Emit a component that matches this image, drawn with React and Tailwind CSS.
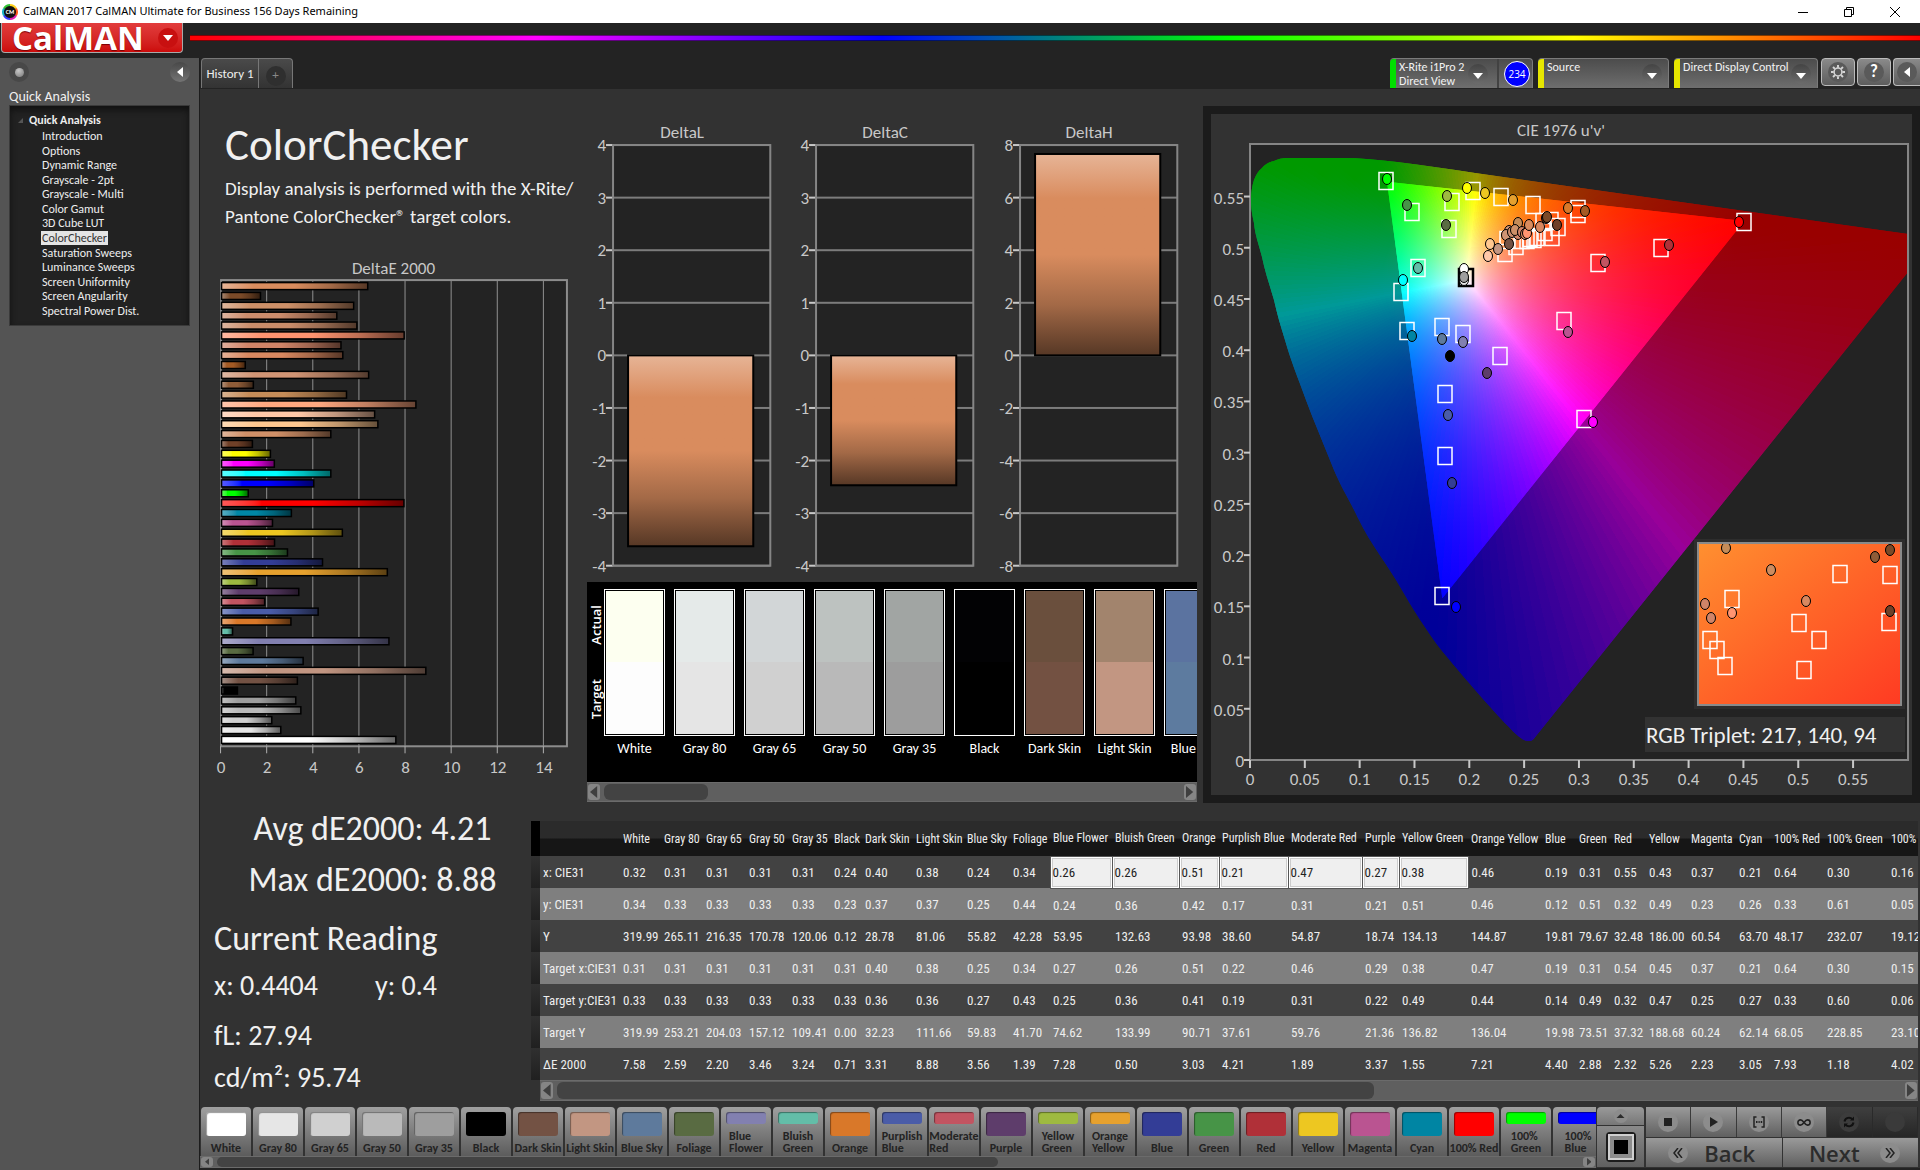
import { Fragment } from 'react';

// ── Data ───────────────────────────────────────────────────────────────────

const PATCHES = [
  { name: 'White', color: '#ffffff', actual: '#fdfff0', target: '#fdfdfd' },
  { name: 'Gray 80', color: '#e6e6e6', actual: '#e5eae9', target: '#e5e5e5' },
  { name: 'Gray 65', color: '#d0d0d0', actual: '#d2d6d7', target: '#d0d0d0' },
  { name: 'Gray 50', color: '#bababa', actual: '#bdc2c0', target: '#b9b9b9' },
  { name: 'Gray 35', color: '#9e9e9e', actual: '#a1a5a3', target: '#9d9d9d' },
  { name: 'Black', color: '#000000', actual: '#020204', target: '#000000' },
  { name: 'Dark Skin', color: '#735244', actual: '#6a4f3d', target: '#735142' },
  { name: 'Light Skin', color: '#c29682', actual: '#a2846d', target: '#c29682' },
  { name: 'Blue Sky', color: '#5e7a9c', actual: '#5b73a0', target: '#5d7b9f' },
  { name: 'Foliage', color: '#596b42' },
  { name: 'Blue Flower', color: '#8280b0', lines: ['Blue', 'Flower'] },
  { name: 'Bluish Green', color: '#63bda8', lines: ['Bluish', 'Green'] },
  { name: 'Orange', color: '#d97829' },
  { name: 'Purplish Blue', color: '#4a5ca8', lines: ['Purplish', 'Blue'] },
  { name: 'Moderate Red', color: '#c25461', lines: ['Moderate', 'Red'] },
  { name: 'Purple', color: '#5e3d6b' },
  { name: 'Yellow Green', color: '#9eba40', lines: ['Yellow', 'Green'] },
  { name: 'Orange Yellow', color: '#e6a12e', lines: ['Orange', 'Yellow'] },
  { name: 'Blue', color: '#333d96' },
  { name: 'Green', color: '#479447' },
  { name: 'Red', color: '#b03038' },
  { name: 'Yellow', color: '#edc721' },
  { name: 'Magenta', color: '#ba5491' },
  { name: 'Cyan', color: '#0085a3' },
  { name: '100% Red', color: '#ff0000' },
  { name: '100% Green', color: '#00ff00', lines: ['100%', 'Green'] },
  { name: '100% Blue', color: '#0000ff', lines: ['100%', 'Blue'] },
];

const COLUMN_WIDTHS = [9, 80, 41, 42, 43, 43, 42, 31, 51, 51, 46, 40, 62, 67, 40, 69, 74, 37, 69, 74, 34, 35, 35, 42, 48, 35, 53, 64, 40];

const READINGS = [
  ['x: CIE31', '0.32 0.31 0.31 0.31 0.31 0.24 0.40 0.38 0.24 0.34 0.26 0.26 0.51 0.21 0.47 0.27 0.38 0.46 0.19 0.31 0.55 0.43 0.37 0.21 0.64 0.30 0.16'],
  ['y: CIE31', '0.34 0.33 0.33 0.33 0.33 0.23 0.37 0.37 0.25 0.44 0.24 0.36 0.42 0.17 0.31 0.21 0.51 0.46 0.12 0.51 0.32 0.49 0.23 0.26 0.33 0.61 0.05'],
  ['Y', '319.99 265.11 216.35 170.78 120.06 0.12 28.78 81.06 55.82 42.28 53.95 132.63 93.98 38.60 54.87 18.74 134.13 144.87 19.81 79.67 32.48 186.00 60.54 63.70 48.17 232.07 19.12'],
  ['Target x:CIE31', '0.31 0.31 0.31 0.31 0.31 0.31 0.40 0.38 0.25 0.34 0.27 0.26 0.51 0.22 0.46 0.29 0.38 0.47 0.19 0.31 0.54 0.45 0.37 0.21 0.64 0.30 0.15'],
  ['Target y:CIE31', '0.33 0.33 0.33 0.33 0.33 0.33 0.36 0.36 0.27 0.43 0.25 0.36 0.41 0.19 0.31 0.22 0.49 0.44 0.14 0.49 0.32 0.47 0.25 0.27 0.33 0.60 0.06'],
  ['Target Y', '319.99 253.21 204.03 157.12 109.41 0.00 32.23 111.66 59.83 41.70 74.62 133.99 90.71 37.61 59.76 21.36 136.82 136.04 19.98 73.51 37.32 188.68 60.24 62.14 68.05 228.85 23.10'],
  ['ΔE 2000', '7.58 2.59 2.20 3.46 3.24 0.71 3.31 8.88 3.56 1.39 7.28 0.50 3.03 4.21 1.89 3.37 1.55 7.21 4.40 2.88 2.32 5.26 2.23 3.05 7.93 1.18 4.02'],
];

const DELTA_E = [
  [6.36, '#d98c5e'], [1.71, '#7a4a28'], [5.75, '#cd9068'], [5.02, '#cc8c6c'], [5.89, '#c98c6a'], [7.94, '#ff9470'], [5.2, '#d08468'], [5.28, '#d88860'],
  [1.05, '#a45a24'], [6.4, '#d09474'], [1.4, '#8f5c38'], [5.44, '#c58c58'], [8.45, '#ffa880'], [6.66, '#ffc8a8'], [6.8, '#ffc890'], [4.76, '#d09068'], [1.36, '#6f4028'],
  [2.14, '#ffff00'], [2.31, '#ff00ff'], [4.76, '#00ffff'], [4.02, '#0000ff'], [1.18, '#00ff00'], [7.93, '#ff0000'], [3.05, '#0087a5'], [2.23, '#ba5491'],
  [5.26, '#edc721'], [2.32, '#b03038'], [2.88, '#479447'], [4.4, '#333d96'], [7.21, '#e6a12e'], [1.55, '#9eba40'], [3.37, '#5e3d6b'], [1.89, '#c25461'],
  [4.21, '#4a5ca8'], [3.03, '#d97829'], [0.5, '#63bda8'], [7.28, '#8280b0'], [1.39, '#596b42'], [3.56, '#5e7a9c'], [8.88, '#c29682'], [3.31, '#735244'],
  [0.71, '#000000'], [3.24, '#9e9e9e'], [3.46, '#bababa'], [2.2, '#d0d0d0'], [2.59, '#e6e6e6'], [7.58, '#ffffff'],
];

const WORKFLOW = [
  'Introduction', 'Options', 'Dynamic Range', 'Grayscale - 2pt', 'Grayscale - Multi', 'Color Gamut', '3D Cube LUT',
  'ColorChecker', 'Saturation Sweeps', 'Luminance Sweeps', 'Screen Uniformity', 'Screen Angularity', 'Spectral Power Dist.',
];

// ── Small shared pieces ────────────────────────────────────────────────────

function ScrollBar({ className, thumbClass, label }) {
  return (
    <div role="scrollbar" aria-orientation="horizontal" aria-controls={label} aria-valuenow={0} className={`flex items-stretch gap-1 bg-[#5f5f5f] border-y border-[#6b6b6b] px-px ${className}`}>
      <button type="button" aria-label="Scroll left" className="w-3 shrink-0 rounded-[3px] bg-[#858585] flex items-center justify-center">
        <svg viewBox="0 0 6 10" className="h-3/4"><path d="M6 0v10L0 5z" fill="#3f3f3f" /></svg>
      </button>
      <div className="flex-1">
        <div className={`h-full rounded-md bg-[#434343] ${thumbClass}`} />
      </div>
      <button type="button" aria-label="Scroll right" className="w-3 shrink-0 rounded-[3px] bg-[#858585] flex items-center justify-center">
        <svg viewBox="0 0 6 10" className="h-3/4"><path d="M0 0v10l6-5z" fill="#3f3f3f" /></svg>
      </button>
    </div>
  );
}

function DropArrow() {
  return (
    <span className="w-5 h-5 rounded-full bg-linear-to-b from-[#444] to-[#6c6c6c] flex items-center justify-center shrink-0">
      <svg viewBox="0 0 10 6" className="w-[10px] mt-1"><path d="M0 0h10L5 6z" fill="#fff" /></svg>
    </span>
  );
}

// ── Window chrome ──────────────────────────────────────────────────────────

function TitleBar() {
  return (
    <header className="h-[23px] bg-white text-black flex items-center pl-[2px]">
      <svg viewBox="0 0 16 16" className="w-4 h-4">
        <circle cx="8" cy="8" r="7" fill="#111" />
        <g fill="none" strokeWidth="2">
          <path d="M8 1a7 7 0 0 1 6 3.5" stroke="#ffd21f" />
          <path d="M14 4.500a7 7 0 0 1 0 7" stroke="#ff5a1f" />
          <path d="M14 11.500a7 7 0 0 1-6 3.500" stroke="#e21fb0" />
          <path d="M8 15a7 7 0 0 1-6-3.500" stroke="#3b3bff" />
          <path d="M2 11.500a7 7 0 0 1 0-7" stroke="#16b4c8" />
          <path d="M2 4.500a7 7 0 0 1 6-3.500" stroke="#35c435" />
        </g>
        <text x="8" y="10" textAnchor="middle" fontSize="6" fontWeight="700" fill="#fff">CM</text>
      </svg>
      <h1 className="ml-[5px] text-[11px] font-['Noto_Sans',sans-serif]">CalMAN 2017 CalMAN Ultimate for Business 156 Days Remaining</h1>
      <div className="ml-auto flex items-center gap-9 pr-5">
        <button type="button" aria-label="Minimize"><svg viewBox="0 0 10 10" className="w-[10px]"><path d="M0 5.500h10" stroke="#000" /></svg></button>
        <button type="button" aria-label="Restore"><svg viewBox="0 0 10 10" className="w-[10px]" fill="none" stroke="#000"><path d="M.5 2.500h7v7h-7zM2.500 2.500v-2h7v7h-2" /></svg></button>
        <button type="button" aria-label="Close"><svg viewBox="0 0 10 10" className="w-[10px]"><path d="M0 0l10 10M10 0L0 10" stroke="#000" /></svg></button>
      </div>
    </header>
  );
}

function Brand() {
  return (
    <div className="h-[35px] bg-[#232323] flex items-start">
      <button type="button" className="ml-px w-[182px] h-[30px] rounded-b-[4px] border border-t-0 border-[#a9a9a9] bg-linear-to-b from-[#e23c3c] to-[#cc0a0a] flex items-center pl-[10px] pr-1">
        <span className="text-[33px] leading-[28px] font-bold text-white font-['Open_Sans',sans-serif] [text-shadow:0_1px_1px_#7a0000]">CalMAN</span>
        <span className="ml-auto w-5 h-5 rounded-full bg-[#c81010] flex items-center justify-center">
          <svg viewBox="0 0 10 6" className="w-[10px]"><path d="M0 0h10L5 6z" fill="#fff" /></svg>
        </span>
      </button>
      <div className="ml-[7px] mt-3 h-[6px] flex-1 border-y border-black/50 bg-[linear-gradient(to_right,#f00,#f0f_20%,#00f_40%,#0f0_60%,#ff0_80%,#f00)]" />
    </div>
  );
}

function Sidebar() {
  return (
    <aside className="w-[200px] shrink-0 bg-[#545454] border-r border-[#1c1c1c] px-[9px]">
      <div className="flex justify-between pt-1">
        <span className="w-5 h-5 rounded-full bg-[#484848] flex items-center justify-center">
          <span className="w-[9px] h-[9px] rounded-full bg-[radial-gradient(circle_at_40%_30%,#c8c8c8,#777)]" />
        </span>
        <button type="button" aria-label="Collapse" className="w-5 h-5 rounded-full bg-linear-to-b from-[#484848] to-[#747474] flex items-center justify-center">
          <svg viewBox="0 0 6 10" className="w-[6px]"><path d="M6 0v10L0 5z" fill="#fff" /></svg>
        </button>
      </div>
      <h2 className="mt-[6px] text-[14px] leading-[17px] text-[#f0f0f0]">Quick Analysis</h2>
      <nav className="h-[221px] border border-[#3a3a3a] bg-[#222] shadow-[inset_0_4px_6px_#111] text-[12px] leading-[14px] text-[#eee] pt-[6px] pl-2">
        <h3 className="flex items-center gap-[6px] font-bold leading-[17px]">
          <svg viewBox="0 0 5 5" className="w-[5px]"><path d="M5 0v5H0z" fill="#555" /></svg>
          Quick Analysis
        </h3>
        <ul className="h-[189px] pl-[23px] flex flex-col justify-between">
          {WORKFLOW.map((item) => (
            <li key={item}>
              <a href="#" className={item === 'ColorChecker' ? 'bg-[#e4e4e4] text-[#333] px-px' : 'px-px'}>{item}</a>
            </li>
          ))}
        </ul>
      </nav>
    </aside>
  );
}

function SourceTab({ color, width, children }) {
  return (
    <button type="button" className={`h-[30px] rounded-t-[4px] border-t border-r border-[#7b7b7b] bg-linear-to-b from-[#4c4c4c] to-[#6e6e6e] flex items-center text-left text-[12px] leading-[14px] text-[#f2f2f2] whitespace-nowrap ${width}`}>
      <span className={`w-[6px] h-full shrink-0 rounded-tl-[4px] ${color}`} />
      {children}
    </button>
  );
}

function TopTabs() {
  return (
    <div className="h-[31px] bg-[#232323] flex items-start">
      <button type="button" className="ml-px w-[58px] h-[30px] rounded-tl-[4px] border border-b-0 border-[#777] bg-linear-to-b from-[#4a4a4a] to-[#333] text-[13px] text-[#eee]">History 1</button>
      <button type="button" aria-label="Add history" className="w-[34px] h-[30px] rounded-tr-[4px] border border-b-0 border-l-0 border-[#777] bg-linear-to-b from-[#4a4a4a] to-[#333] flex items-center justify-center">
        <span className="mt-1 w-5 h-5 rounded-full bg-[#2f2f2f] text-[13px] leading-[18px] text-[#888]">+</span>
      </button>
      <div className="ml-auto flex">
        <SourceTab color="bg-[#00e000]" width="w-[143px]">
          <span className="pl-[3px] w-[72px]">X-Rite i1Pro 2<br />Direct View</span>
          <DropArrow />
          <span className="ml-[9px] h-full border-l-2 border-[#424242] flex items-center pl-[5px]">
            <span className="w-[26px] h-[26px] rounded-full border border-white bg-[#0000ff] text-white text-[10px] leading-[24px] text-center font-['Open_Sans',sans-serif]">234</span>
          </span>
        </SourceTab>
        <span className="w-[5px]" />
        <SourceTab color="bg-[#e6e600]" width="w-[131px]">
          <span className="pl-[3px] h-full pt-px">Source</span>
          <span className="ml-auto pr-[6px]"><DropArrow /></span>
        </SourceTab>
        <span className="w-[5px]" />
        <SourceTab color="bg-[#e6e600]" width="w-[144px]">
          <span className="pl-[3px] h-full pt-px">Direct Display Control</span>
          <span className="ml-auto pr-[6px]"><DropArrow /></span>
        </SourceTab>
        <div className="flex gap-[2px] pl-[3px]">
          <button type="button" aria-label="Settings" className="w-[34px] h-7 rounded-[4px] border border-[#bbb] bg-linear-to-b from-[#8a8a8a] to-[#5d5d5d] flex items-center justify-center">
            <span className="w-5 h-5 rounded-full bg-[#5a5a5a] flex items-center justify-center">
              <svg viewBox="0 0 16 16" className="w-[14px]" fill="none" stroke="#d5d5d5">
                <circle cx="8" cy="8" r="4.500" strokeWidth="1.800" />
                <path strokeWidth="2.200" d="M8 0v3M8 13v3M0 8h3M13 8h3M2.300 2.300l2.200 2.200M11.500 11.500l2.200 2.200M13.700 2.300l-2.200 2.200M4.500 11.500l-2.200 2.200" />
              </svg>
            </span>
          </button>
          <button type="button" aria-label="Help" className="w-[34px] h-7 rounded-[4px] border border-[#bbb] bg-linear-to-b from-[#8a8a8a] to-[#5d5d5d] flex items-center justify-center">
            <span className="w-5 h-5 rounded-full bg-[#5a5a5a] text-white text-[17px] leading-[20px] font-bold">?</span>
          </button>
          <button type="button" aria-label="Collapse panel" className="w-[27px] h-7 rounded-l-[4px] border border-r-0 border-[#bbb] bg-linear-to-b from-[#8a8a8a] to-[#5d5d5d] flex items-center justify-center">
            <span className="w-5 h-5 rounded-full bg-[#5a5a5a] flex items-center justify-center">
              <svg viewBox="0 0 6 10" className="w-[6px]"><path d="M6 0v10L0 5z" fill="#fff" /></svg>
            </span>
          </button>
        </div>
      </div>
    </div>
  );
}

// ── Charts ─────────────────────────────────────────────────────────────────

// highlight -> base -> shadow, along the bar
function BarGradient({ id, color, vertical }) {
  return (
    <linearGradient id={id} x1="0" y1="0" x2={vertical ? 0 : 1} y2={vertical ? 1 : 0}>
      <stop offset="0" stopColor={`color-mix(in srgb, ${color} 65%, white)`} />
      <stop offset="0.22" stopColor={color} />
      <stop offset="0.5" stopColor={color} />
      <stop offset="0.75" stopColor={`color-mix(in srgb, ${color} 75%, black)`} />
      <stop offset="1" stopColor={`color-mix(in srgb, ${color} 40%, black)`} />
    </linearGradient>
  );
}

function DeltaEChart() {
  const left = 21;
  const top = 31;
  const bottom = 496;
  const unit = 23;
  return (
    <svg viewBox="0 0 386 540" className="w-full" fill="#c8c8c8" fontSize="17">
      <text x="193" y="25" textAnchor="middle">DeltaE 2000</text>
      <rect x={left} y={top} width={345} height={bottom - top} fill="#232323" />
      {[2, 4, 6, 8, 10, 12, 14].map((v) => <rect key={v} x={left + v * unit - 1} y={top} width="1" height={bottom - top} fill="#909090" />)}
      <rect x={left} y={top} width={345} height={bottom - top} fill="none" stroke="#8c8c8c" strokeWidth="2" />
      {DELTA_E.map(([value, color], i) => (
        <Fragment key={i}>
          <BarGradient id={`de${i}`} color={color} />
          <rect x={left + 0.5} y={top + 2.5 + i * 9.84} width={value * unit - 0.5} height="7" fill={`url(#de${i})`} stroke="#000" strokeWidth="1.5" />
        </Fragment>
      ))}
      {[0, 2, 4, 6, 8, 10, 12, 14].map((v) => (
        <Fragment key={v}>
          <rect x={left + v * unit - 1} y={bottom} width="1" height="7" fill="#b0b0b0" />
          <text x={left + v * unit} y="523" textAnchor="middle">{v}</text>
        </Fragment>
      ))}
    </svg>
  );
}

function DeltaChart({ title, max, value }) {
  const zero = 236;
  const span = 210;
  const h = (Math.abs(value) / max) * span;
  return (
    <svg viewBox="0 0 203 462" className="w-full" fill="#c8c8c8" fontSize="17">
      <text x="95" y="19" textAnchor="middle">{title}</text>
      <rect x="26" y="25" width="157" height="420" fill="#232323" />
      {[4, 3, 2, 1, 0, -1, -2, -3, -4].map((s) => {
        const y = zero - 1 - (s * span) / 4;
        return (
          <Fragment key={s}>
            <rect x="19" y={y} width="7" height="2" fill="#c8c8c8" />
            <rect x="26" y={y} width="157" height="2" fill="#7c7c7c" />
            <text x="19" y={y + 7} textAnchor="end">{(s * max) / 4}</text>
          </Fragment>
        );
      })}
      <rect x="26" y="26" width="157" height="420" fill="none" stroke="#858585" strokeWidth="2" />
      <BarGradient id={title} color="#d98c5e" vertical />
      <rect x="41" y={value < 0 ? zero : zero - h} width="125" height={h} fill={`url(#${title})`} stroke="#000" strokeWidth="2" />
    </svg>
  );
}

// ── CIE 1976 u'v' diagram ──────────────────────────────────────────────────

const U_SCALE = 1096.5;
const V_SCALE = 1024.5;
const PLOT_H = 616;
const WHITE = [0.1978, 0.4683];
const PRIMARIES = [[0.4507, 0.526], [0.125, 0.5645], [0.1754, 0.158]];

const toPlot = ([u, v]) => [u * U_SCALE, PLOT_H - v * V_SCALE];

function chromaToRgb(u, v, level) {
  const d = 6 * u - 16 * v + 12;
  const x = (9 * u) / d;
  const y = (4 * v) / d;
  const X = x / y;
  const Z = (1 - x - y) / y;
  const lin = [
    3.2406 * X - 1.5372 - 0.4986 * Z,
    -0.9689 * X + 1.8758 + 0.0415 * Z,
    0.0557 * X - 0.204 + 1.057 * Z,
  ].map((c) => Math.max(0, c));
  const peak = Math.max(...lin);
  return `rgb(${lin.map((c) => Math.round(255 * level * (c / peak))).join(',')})`;
}

const RAYS = 240;
const REACH = 0.62;

// One thin wedge per direction from the white point, coloured along its length
function Wedges({ prefix, level, reach, steps }) {
  const [cx, cy] = toPlot(WHITE);
  return Array.from({ length: RAYS }).map((_, i) => {
    const a = (i / RAYS) * Math.PI * 2;
    const at = (angle, r) => toPlot([WHITE[0] + Math.cos(angle) * r, WHITE[1] + Math.sin(angle) * r]);
    const [mx, my] = at(a, reach);
    const half = (Math.PI / RAYS) * 2;
    const [ax, ay] = at(a - half, reach * 1.05);
    const [bx, by] = at(a + half, reach * 1.05);
    return (
      <Fragment key={i}>
        <linearGradient id={`${prefix}${i}`} gradientUnits="userSpaceOnUse" x1={cx} y1={cy} x2={mx} y2={my}>
          {Array.from({ length: steps + 1 }).map((__, k) => {
            const t = (k / steps) ** 1.5;
            const v = Math.min(0.6, Math.max(0.005, WHITE[1] + Math.sin(a) * reach * t));
            const u = Math.max(0.001, WHITE[0] + Math.cos(a) * reach * t);
            return <stop key={k} offset={t} stopColor={chromaToRgb(u, v, level)} />;
          })}
        </linearGradient>
        <path d={`M${cx} ${cy}L${ax} ${ay}L${bx} ${by}z`} fill={`url(#${prefix}${i})`} shapeRendering="crispEdges" />
      </Fragment>
    );
  });
}

const LOCUS = 'M279 597C272 598 262 586 257 581C245 569 211 530 198 514C190 505 183 495 175 483C167 471 160 460 152 446C138 421 121 401 108 374C99 355 92 345 84 326C73 298 65 280 56 256C48 234 41 217 35 196C31 183 27 170 24 156C20 142 15 128 12 113C9 101 5 91 4 79C2 70 1 64 1 56C1 49 2 42 4 36C6 31 8 27 12 24C15 20 19 18 24 17C28 15 32 14 37 14L92 14C111 14 128 16 147 18C173 21 199 25 225 29L658 90V128L286 592C284 595 282 597 279 597z';

const TARGETS = [
  [136, 37], [223, 47], [202, 58], [251, 53], [283, 61], [162, 68], [199, 85], [494, 78], [411, 104], [348, 119], [168, 124], [151, 148], [157, 187],
  [192, 183], [213, 190], [250, 212], [314, 177], [195, 250], [334, 275], [195, 312], [192, 452], [255, 109], [266, 102], [257, 96], [272, 96], [277, 96],
  [280, 94], [284, 95], [287, 93], [295, 88], [293, 78], [301, 77], [302, 93], [308, 83], [328, 65], [328, 70],
];

const MEASURED = [
  [217, 44, '#ffff00'], [235, 49, '#edc721'], [263, 56, '#e6a12e'], [197, 52, '#9eba40'], [196, 81, '#596b42'], [318, 64, '#d97829'], [335, 67, '#a45a24'],
  [296, 74, '#5a3820'], [297, 73, '#7a4a28'], [307, 81, '#6f4028'], [268, 79, '#c58c58'], [259, 87, '#d09474'], [256, 91, '#d09474'], [262, 88, '#cc8c6c'],
  [268, 90, '#d08468'], [265, 86, '#cd9068'], [272, 88, '#d08468'], [275, 90, '#d88860'], [277, 89, '#ff9470'], [279, 81, '#d98c5e'], [290, 83, '#d88860'],
  [259, 100, '#735244'], [248, 105, '#c29682'], [240, 100, '#ffc890'], [238, 112, '#ffc8a8'], [214, 125, '#ffffff'], [214, 136, '#e6e6e6'], [214, 133, '#9e9e9e'],
  [355, 118, '#c25461'], [419, 101, '#b03038'], [318, 188, '#ba5491'], [192, 195, '#5e7a9c'], [213, 198, '#8280b0'], [137, 35, '#00ff00'], [157, 61, '#479447'],
  [168, 124, '#63bda8'], [153, 136, '#00ffff'], [162, 192, '#0085a3'], [200, 212, '#000000'], [237, 229, '#5e3d6b'], [198, 271, '#4a5ca8'],
  [489, 78, '#ff0000'], [343, 278, '#ff00ff'], [202, 339, '#333d96'], [206, 463, '#0000ff'],
];

const INSET_TARGETS = [[590, 430], [640, 431], [482, 455], [549, 479], [569, 496], [554, 526], [639, 478], [460, 496], [467, 506], [475, 522]];
const INSET_MEASURED = [
  [476, 404, '#c58c58'], [521, 426, '#cd8c60'], [556, 457, '#d88860'], [625, 413, '#8f5c38'], [640, 406, '#7a4a28'],
  [640, 467, '#6f4028'], [455, 460, '#d08468'], [461, 474, '#d08468'], [482, 469, '#ff9470'],
];

function Markers({ targets, measured }) {
  return (
    <>
      {targets.map(([x, y], i) => <rect key={i} x={x - 7} y={y - 8.5} width="14" height="17" fill="none" stroke="#fff" strokeWidth="1.5" />)}
      {measured.map(([x, y, color], i) => <ellipse key={i} cx={x} cy={y} rx="4.500" ry="5.500" fill={color} stroke="#000" />)}
    </>
  );
}

function CieChart() {
  const ticks = [0, 0.05, 0.1, 0.15, 0.2, 0.25, 0.3, 0.35, 0.4, 0.45, 0.5, 0.55];
  return (
    <svg viewBox="0 0 701 681" className="w-full" fill="#c8c8c8" fontSize="17">
      <defs>
        <clipPath id="locus"><path d={LOCUS} /></clipPath>
        <clipPath id="gamut"><polygon points={PRIMARIES.map((p) => toPlot(p).join(',')).join(' ')} /></clipPath>
        <clipPath id="inset"><rect x="447" y="399" width="205" height="163" /></clipPath>
        <linearGradient id="insetFill" x1="0" y1="0" x2="1" y2="1">
          <stop offset="0" stopColor="#ff9030" />
          <stop offset="0.5" stopColor="#ff6428" />
          <stop offset="1" stopColor="#ff3a22" />
        </linearGradient>
      </defs>
      <text x="350" y="22" textAnchor="middle">CIE 1976 u'v'</text>
      <g transform="translate(39 30)">
        <rect width="658" height={PLOT_H} fill="#232323" />
        <g clipPath="url(#locus)"><Wedges prefix="o" level={0.6} reach={REACH} steps={24} /></g>
        <g clipPath="url(#gamut)"><Wedges prefix="i" level={1} reach={0.34} steps={24} /></g>
        <rect width="658" height={PLOT_H} fill="none" stroke="#858585" strokeWidth="2" />
        {ticks.map((t) => (
          <Fragment key={t}>
            <rect x={t * U_SCALE - 1} y={PLOT_H} width="2" height="8" fill="#c8c8c8" />
            <text x={t * U_SCALE} y="641" textAnchor="middle">{t}</text>
            <rect x="-6" y={PLOT_H - t * V_SCALE - 1} width="6" height="2" fill="#c8c8c8" />
            <text x="-6" y={PLOT_H - t * V_SCALE + 7} textAnchor="end">{t}</text>
          </Fragment>
        ))}
        <Markers targets={TARGETS} measured={[]} />
        <rect x="209" y="125" width="14" height="17" fill="none" stroke="#000" strokeWidth="2.500" />
        <Markers targets={[]} measured={MEASURED} />
        <rect x="444" y="395" width="211" height="170" fill="#2d2d2d" />
        <g clipPath="url(#inset)">
          <rect x="447" y="399" width="205" height="163" fill="url(#insetFill)" />
          <Markers targets={INSET_TARGETS} measured={INSET_MEASURED} />
        </g>
        <rect x="448" y="399" width="203" height="162" fill="none" stroke="#8a8a8a" strokeWidth="2" />
        <rect x="395" y="573" width="260" height="35" fill="#323232" />
        <text x="396" y="599" fontSize="23" fill="#f0f0f0">RGB Triplet: 217, 140, 94</text>
      </g>
    </svg>
  );
}

// ── Swatch strip ───────────────────────────────────────────────────────────

function SwatchStrip() {
  return (
    <div>
      <div id="swatches" className="h-[200px] bg-black flex overflow-hidden pt-[7px]">
        <div className="w-[17px] h-[147px] shrink-0 flex flex-col justify-around items-center text-[13px] leading-[16px] font-semibold text-white font-['Open_Sans',sans-serif]">
          <span className="[writing-mode:vertical-rl] rotate-180">Actual</span>
          <span className="[writing-mode:vertical-rl] rotate-180">Target</span>
        </div>
        <div className="flex gap-[9px]">
          {PATCHES.slice(0, 9).map((p) => (
            <div key={p.name} className="w-[61px] shrink-0">
              <div className="h-[147px] border border-white p-px">
                <div className="h-1/2" style={{ background: p.actual }} />
                <div className="h-1/2" style={{ background: p.target }} />
              </div>
              <p className="mt-1 text-center text-[14px] leading-[18px] text-white whitespace-nowrap">{p.name}</p>
            </div>
          ))}
        </div>
      </div>
      <ScrollBar label="swatches" className="h-5 py-px" thumbClass="w-[104px]" />
    </div>
  );
}

// ── Readings ───────────────────────────────────────────────────────────────

function Summary() {
  return (
    <section className="w-[331px] shrink-0 pl-[14px] text-[#f0f0f0]">
      <div className="text-center text-[34px] leading-[51px]">
        <p>Avg dE2000: 4.21</p>
        <p>Max dE2000: 8.88</p>
      </div>
      <h3 className="mt-[8px] text-[34px] leading-[51px]">Current Reading</h3>
      <div className="text-[28px]">
        <p className="flex leading-[44px]"><span className="w-[161px]">x: 0.4404</span><span>y: 0.4</span></p>
        <p className="mt-[7px] leading-[42px]">fL: 27.94</p>
        <p className="leading-[42px]">cd/m²: 95.74</p>
      </div>
    </section>
  );
}

function ReadingsTable() {
  return (
    <section className="flex-1 min-w-0 mt-[18px] mr-[2px]">
      <div id="readings" className="overflow-hidden">
        <table className="table-fixed w-[1397px] border-collapse text-[13px] text-left text-[#eee] whitespace-nowrap font-['Roboto_Condensed','Carlito',sans-serif]">
          <colgroup>{COLUMN_WIDTHS.map((w, i) => <col key={i} style={{ width: w }} />)}</colgroup>
          <thead>
            <tr className="h-[35px] text-[12px] bg-[linear-gradient(#2b2b2b,#2b2b2b_48%,#161616_52%,#161616)]">
              <td className="bg-black" />
              <td />
              {PATCHES.map((p) => <th key={p.name} scope="col" className="p-0 pl-[3px] font-normal">{p.name}</th>)}
            </tr>
          </thead>
          <tbody>
            {READINGS.map(([label, values], r) => (
              <tr key={label} className={`h-8 ${r % 2 ? 'bg-[#7f7f7f]' : 'bg-[#424242]'}`}>
                <td className="bg-linear-to-b from-[#303030] to-[#202020]" />
                <th scope="row" className="p-0 pt-[2px] pl-[3px] font-normal">{label}</th>
                {values.split(' ').map((v, c) => (
                  <td key={c} className={r === 0 && c > 9 && c < 17 ? 'p-0 pt-[2px] pl-[2px] bg-[#efefef] text-[#222] border border-[#555] shadow-[inset_0_0_0_1px_#fff,inset_0_0_0_2px_#ccc]' : 'p-0 pt-[2px] pl-[3px]'}>{v}</td>
                ))}
              </tr>
            ))}
          </tbody>
        </table>
      </div>
      <ScrollBar label="readings" className="h-[21px] ml-[9px] py-px" thumbClass="w-[817px]" />
    </section>
  );
}

// ── Bottom bar ─────────────────────────────────────────────────────────────

function IconDot({ children }) {
  return <span className="w-5 h-5 rounded-full bg-[#8c8c8c] flex items-center justify-center shrink-0">{children}</span>;
}

function PatchBar() {
  return (
    <div className="flex-1 min-w-0 bg-[#323232]">
      <div id="patches" className="flex gap-[2px] overflow-hidden pl-px">
        {PATCHES.map((p) => (
          <button key={p.name} type="button" className="w-[50px] h-[49px] shrink-0 rounded-t-[4px] bg-linear-to-b from-[#a0a0a0] to-[#5c5c5c] pt-[5px] flex flex-col items-center justify-between text-[12px] leading-[12px] font-bold text-[#232323] text-left whitespace-nowrap pb-[2px]">
            <span className={`w-10 rounded-[3px] shadow-[inset_1px_1px_1px_#0006] ${p.lines ? 'h-3' : 'h-6'}`} style={{ background: p.color }} />
            <span>{p.lines ? <>{p.lines[0]}<br />{p.lines[1]}</> : p.name}</span>
          </button>
        ))}
      </div>
      <ScrollBar label="patches" className="h-3" thumbClass="w-[781px]" />
    </div>
  );
}

function Transport() {
  const cell = 'h-[30px] border-r border-[#3a3a3a] bg-linear-to-b from-[#9a9a9a] to-[#606060] flex items-center justify-center';
  const off = 'h-[30px] border-r border-[#2a2a2a] bg-linear-to-b from-[#3f3f3f] to-[#262626] flex items-center justify-center';
  const nav = "h-[29px] bg-linear-to-b from-[#9a9a9a] to-[#606060] flex items-center justify-center text-[22px] leading-[28px] font-semibold text-[#2c2c2c] font-['Open_Sans',sans-serif]";
  return (
    <div className="flex gap-[2px] pl-px pr-[2px]">
      <div className="w-[47px] flex flex-col gap-px">
        <button type="button" aria-label="Expand" className="h-[18px] rounded-t-[4px] bg-linear-to-b from-[#9a9a9a] to-[#777] flex items-center justify-center">
          <span className="w-[14px] h-[14px] rounded-full bg-[#8c8c8c] flex items-center justify-center"><svg viewBox="0 0 10 5" className="w-[9px]"><path d="M0 5h10L5 0z" fill="#2c2c2c" /></svg></span>
        </button>
        <button type="button" aria-label="Pattern window" className="h-[41px] bg-linear-to-b from-[#8a8a8a] to-[#606060] flex items-center justify-center">
          <span className="w-[30px] h-[30px] rounded-[4px] border-2 border-[#1c1c1c] flex">
            <span className="flex-1 border-2 border-[#d0d0d0] bg-[#8c8c8c] flex items-center justify-center"><span className="w-[14px] h-[14px] bg-black" /></span>
          </span>
        </button>
      </div>
      <div className="w-[272px]">
        <div className="grid grid-cols-6">
          <button type="button" aria-label="Stop" className={cell}><IconDot><svg viewBox="0 0 8 8" className="w-2"><rect width="8" height="8" fill="#222" /></svg></IconDot></button>
          <button type="button" aria-label="Read" className={cell}><IconDot><svg viewBox="0 0 8 10" className="w-2 ml-px"><path d="M0 0l8 5-8 5z" fill="#222" /></svg></IconDot></button>
          <button type="button" aria-label="Read series" className={cell}>
            <IconDot><svg viewBox="0 0 12 12" className="w-3" fill="none" stroke="#222" strokeWidth="1.500"><path d="M3.500 1H1v10h2.500M8.500 1H11v10H8.500" /><path d="M3 6h1.500M5.500 6h1.200M7.700 6h1.500" strokeWidth="2" /></svg></IconDot>
          </button>
          <button type="button" aria-label="Read continuously" className={cell}>
            <IconDot><svg viewBox="0 0 16 8" className="w-[14px]" fill="none" stroke="#222" strokeWidth="1.800"><path d="M8 4C6.500 2 5.500 1 4 1a3 3 0 0 0 0 6c1.500 0 2.500-1 4-3s2.500-3 4-3a3 3 0 0 1 0 6c-1.500 0-2.500-1-4-3z" /></svg></IconDot>
          </button>
          <button type="button" aria-label="Refresh" disabled className={off}>
            <span className="w-5 h-5 rounded-full bg-[#3c3c3c] flex items-center justify-center">
              <svg viewBox="0 0 12 12" className="w-3" fill="none" stroke="#111" strokeWidth="2"><path d="M1.500 5.500a4.500 4.500 0 0 1 8-2M10.500 6.500a4.500 4.500 0 0 1-8 2" /><path d="M11 .5v4H7zM1 11.500v-4h4z" fill="#111" stroke="none" /></svg>
            </span>
          </button>
          <button type="button" aria-label="Record" disabled className={off}><span className="w-5 h-5 rounded-full bg-[#3a3a3a]" /></button>
        </div>
        <div className="mt-px grid grid-cols-2 gap-px">
          <button type="button" className={`gap-4 pr-1 ${nav}`}>
            <IconDot><svg viewBox="0 0 10 10" className="w-[10px]" fill="none" stroke="#222" strokeWidth="1.500"><path d="M5 0L1 5l4 5M9 0L5 5l4 5" /></svg></IconDot>Back
          </button>
          <button type="button" className={`gap-5 pl-2 ${nav}`}>
            Next<IconDot><svg viewBox="0 0 10 10" className="w-[10px]" fill="none" stroke="#222" strokeWidth="1.500"><path d="M1 0l4 5-4 5M5 0l4 5-4 5" /></svg></IconDot>
          </button>
        </div>
      </div>
    </div>
  );
}

// ── Page ───────────────────────────────────────────────────────────────────

export default function App() {
  return (
    <div className="min-h-screen flex flex-col overflow-hidden bg-[#323232] font-['Carlito','Lato',sans-serif]">
      <TitleBar />
      <Brand />
      <div className="flex-1 flex">
        <Sidebar />
        <main className="flex-1 min-w-0 flex flex-col">
          <TopTabs />
          <div className="grid grid-cols-[minmax(0,387fr)_minmax(0,616fr)_minmax(0,717fr)]">
            <section className="text-[#f0f0f0]">
              <h2 className="mt-[26px] pl-[25px] text-[45px] leading-[60px]">ColorChecker</h2>
              <p className="pl-[25px] text-[19px] leading-[28px] whitespace-nowrap">Display analysis is performed with the X-Rite/<br />Pantone ColorChecker® target colors.</p>
              <div className="mt-[18px]"><DeltaEChart /></div>
            </section>
            <section className="pr-[6px] pt-[30px]">
              <div className="grid grid-cols-3">
                <DeltaChart title="DeltaL" max={4} value={-3.63} />
                <DeltaChart title="DeltaC" max={4} value={-2.47} />
                <DeltaChart title="DeltaH" max={8} value={7.66} />
              </div>
              <SwatchStrip />
            </section>
            <section className="mt-[17px] self-start border-8 border-[#1b1b1b]">
              <CieChart />
            </section>
          </div>
          <div className="flex">
            <Summary />
            <ReadingsTable />
          </div>
          <footer className="mt-auto flex border-b-2 border-[#232323]">
            <PatchBar />
            <Transport />
          </footer>
        </main>
      </div>
    </div>
  );
}
